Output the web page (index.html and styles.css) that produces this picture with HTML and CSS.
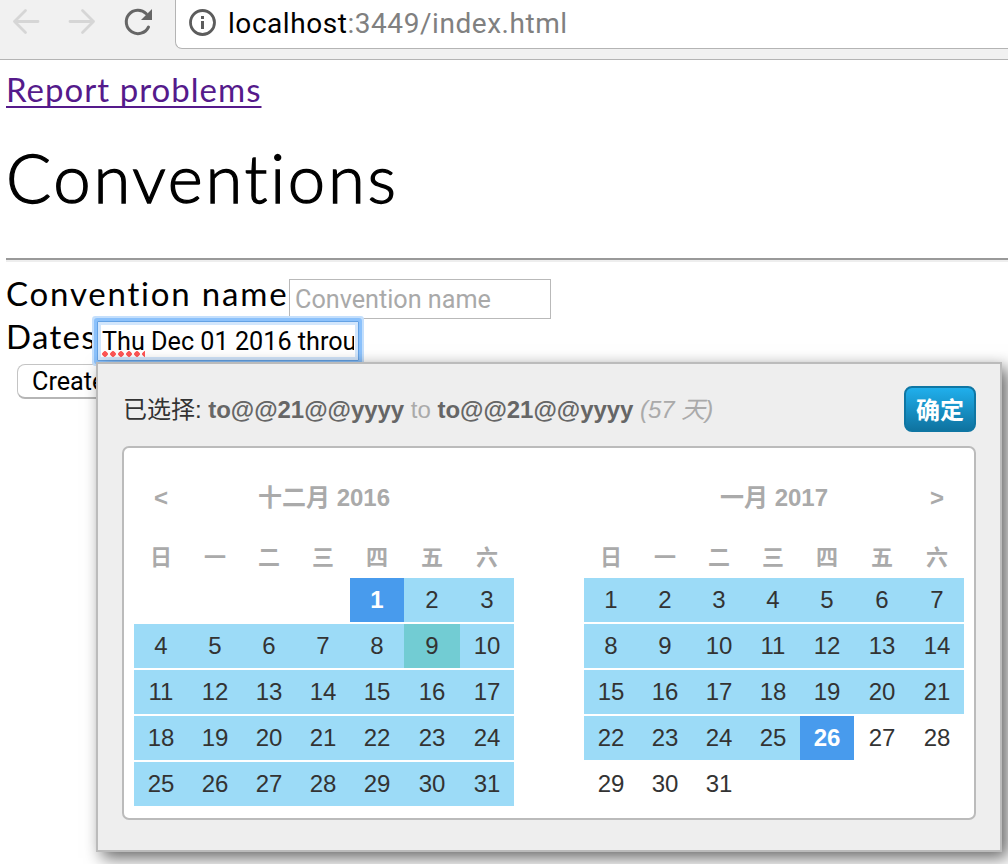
FILE: index.html
```html
<!DOCTYPE html>
<html lang="en">
<head>
<meta charset="utf-8">
<title>Conventions</title>
<link rel="stylesheet" href="styles.css">
</head>
<body>
<header class="toolbar">
  <svg class="nav-icons" width="175" height="59" viewBox="0 0 175 59" fill="none">
    <g stroke="#d6d6d6" stroke-width="2.8" stroke-linecap="round" stroke-linejoin="round">
      <path d="M38 21.5H14.5M25.5 10.5L14.5 21.5L25.5 32.5"/>
      <path d="M70 21.5H93.5M82.500 10.500L93.500 21.500L82.500 32.500"/>
    </g>
    <path d="M148.500 27.000A11.700 11.700 0 1 1 146.300 13.700" stroke="#666" stroke-width="3" stroke-linecap="round"/>
    <path d="M152 9V20H141Z" fill="#666"/>
  </svg>
  <div class="omnibox">
    <svg class="info" width="28" height="28" viewBox="0 0 28 28" fill="none">
      <circle cx="13.500" cy="13.500" r="12" stroke="#5c5c5c" stroke-width="2.800"/>
      <path d="M12 7h3v3h-3zM12 12h3v8h-3z" fill="#5c5c5c"/>
    </svg>
    <span class="url"><span class="host">localhost</span>:3449/index.html</span>
  </div>
</header>
<main class="page">
  <div class="report"><a class="report-link" href="#">Report problems</a></div>
  <h1 class="title">Conventions</h1>
  <hr class="rule">
  <div class="row row-name"><label class="label label-name">Convention name</label><div class="field">Convention name</div></div>
  <div class="row row-dates"><label class="label label-dates">Dates</label><div class="field field-focus"><span class="date-text"><span class="typo">Thu</span> Dec 01 2016 throu</span></div></div>
  <button class="create">Create</button>
</main>
<section class="picker">
  <div class="summary">
    <div class="selection">已选择: <b>to@@21@@yyyy</b> <span class="muted">to</span> <b>to@@21@@yyyy</b> <i class="muted">(57 天)</i></div>
    <button class="apply">确定</button>
  </div>
  <div class="months">
    <div class="month">
      <span class="arrow">&lt;</span><span class="caption">十二月 2016</span><span></span>
      <span class="wd">日</span><span class="wd">一</span><span class="wd">二</span><span class="wd">三</span><span class="wd">四</span><span class="wd">五</span><span class="wd">六</span>
      <span class="day end first-thu">1</span><span class="day in">2</span><span class="day in">3</span>
      <span class="day in">4</span><span class="day in">5</span><span class="day in">6</span><span class="day in">7</span><span class="day in">8</span><span class="day today">9</span><span class="day in">10</span>
      <span class="day in">11</span><span class="day in">12</span><span class="day in">13</span><span class="day in">14</span><span class="day in">15</span><span class="day in">16</span><span class="day in">17</span>
      <span class="day in">18</span><span class="day in">19</span><span class="day in">20</span><span class="day in">21</span><span class="day in">22</span><span class="day in">23</span><span class="day in">24</span>
      <span class="day in">25</span><span class="day in">26</span><span class="day in">27</span><span class="day in">28</span><span class="day in">29</span><span class="day in">30</span><span class="day in">31</span>
    </div>
    <div class="month">
      <span></span><span class="caption">一月 2017</span><span class="arrow">&gt;</span>
      <span class="wd">日</span><span class="wd">一</span><span class="wd">二</span><span class="wd">三</span><span class="wd">四</span><span class="wd">五</span><span class="wd">六</span>
      <span class="day in">1</span><span class="day in">2</span><span class="day in">3</span><span class="day in">4</span><span class="day in">5</span><span class="day in">6</span><span class="day in">7</span>
      <span class="day in">8</span><span class="day in">9</span><span class="day in">10</span><span class="day in">11</span><span class="day in">12</span><span class="day in">13</span><span class="day in">14</span>
      <span class="day in">15</span><span class="day in">16</span><span class="day in">17</span><span class="day in">18</span><span class="day in">19</span><span class="day in">20</span><span class="day in">21</span>
      <span class="day in">22</span><span class="day in">23</span><span class="day in">24</span><span class="day in">25</span><span class="day end">26</span><span class="day">27</span><span class="day">28</span>
      <span class="day">29</span><span class="day">30</span><span class="day">31</span>
    </div>
  </div>
</section>
</body>
</html>
```
FILE: styles.css
```css
* { box-sizing: border-box; }
body {
  margin: 0;
  height: 864px;
  position: relative;
  overflow: hidden;
  background: #fff;
  color: #000;
  font-family: Lato, "Liberation Sans", sans-serif;
}
.toolbar { display: flex; height: 60px; background: #f1f1f1; border-bottom: 1px solid #b4b4b4; }
.nav-icons { flex: none; }
.omnibox {
  flex: 1;
  height: 49px;
  display: flex;
  align-items: center;
  gap: 11px;
  padding: 0 0 2px 13px;
  background: #fff;
  border: 1px solid #b4b4b4;
  border-width: 0 0 1px 1px;
  border-bottom-left-radius: 7px;
}
.url { padding-top: 2px; font: 28px/32px Roboto, sans-serif; letter-spacing: 0.55px; color: #808080; white-space: nowrap; }
.host { color: #000; }
.page { padding-left: 6px; }
.report { height: 66px; padding-top: 9px; font-size: 33px; line-height: 40px; }
.report-link {
  color: #551a8b;
  letter-spacing: 1.020px;
  text-decoration: underline;
  text-decoration-thickness: 2px;
  text-underline-offset: 4px;
  text-decoration-skip-ink: none;
}
.title { margin: 0; height: 132px; padding-top: 9px; font-size: 67px; line-height: 84px; font-weight: 300; letter-spacing: 2.700px; -webkit-text-stroke: 1.300px #000; }
.rule { margin: 0; border: 0; height: 4px; border-top: 2px solid #999; border-bottom: 2px solid #eee; }
.row { display: flex; align-items: flex-start; }
.row-name { height: 56px; padding-top: 17px; }
.row-dates { height: 46px; }
.label { font-size: 33px; line-height: 36px; white-space: nowrap; flex: none; }
.label-name { width: 283px; line-height: 29px; letter-spacing: 1.800px; }
.label-dates { width: 91px; letter-spacing: 1.300px; }
.field {
  width: 262px;
  height: 40px;
  padding: 0 5px;
  border: 1px solid #b9b9b9;
  background: #fff;
  color: #a9a9a9;
  font: 25.200px/39px Roboto, sans-serif;
  white-space: nowrap;
}
.field-focus {
  margin-top: 3px;
  padding: 0 4px 0 4px;
  color: #000;
  border: 1px solid #64a2e4;
  border-radius: 1px;
  box-shadow: inset 0 0 0 3px #d2e6fc, 0 0 0 3px #8bc1fb, 0 0 0 5px #c4dffc;
}
.date-text { display: block; overflow: hidden; }
.typo {
  display: inline-block;
  height: 38px;
  background: radial-gradient(circle at 3px 3px, #f55 2.500px, transparent 3px) 0 29px / 8px 6px repeat-x;
}
.create {
  display: block;
  width: 122px;
  height: 35px;
  margin: 0 0 0 11px;
  padding: 2px 0 0 14px;
  text-align: left;
  border: 1px solid #c4c4c4;
  border-bottom: 2px solid #b5b5b5;
  border-radius: 8px;
  background: #fff;
  font: 25.200px/30px Roboto, sans-serif;
}
.picker {
  position: absolute;
  left: 96px;
  top: 362px;
  width: 906px;
  height: 490px;
  padding: 22px 24px;
  background: #eee;
  border: 2px solid #bbb;
  box-shadow: 6px 6px 16px rgba(0,0,0,.6);
  color: #333;
  font: 24px/30px "Liberation Sans", "Noto Sans CJK SC", sans-serif;
}
.summary { display: flex; justify-content: space-between; height: 60px; }
.selection { padding: 9px 0 0 1px; white-space: nowrap; letter-spacing: -0.030px; }
.selection b { color: #666; }
.muted { color: #aaa; }
.apply {
  width: 72px;
  height: 46px;
  padding: 0;
  border: 2px solid #0f76a3;
  border-radius: 8px;
  background: linear-gradient(#20afec, #0f73a0);
  color: #fff;
  font: bold 24px/40px "Noto Sans CJK SC", sans-serif;
}
.months {
  display: flex;
  justify-content: space-between;
  height: 374px;
  padding: 20px 10px;
  background: #fff;
  border: 2px solid #bbb;
  border-radius: 7px;
}
.month {
  display: grid;
  width: 380px;
  grid-template-columns: repeat(5, 54px) 56px 54px;
  grid-template-rows: 60px 46px repeat(5, 44px);
  row-gap: 2px;
  height: 338px;
  align-content: start;
  text-align: center;
}
.caption { grid-column: 2 / 7; }
.caption, .arrow { color: #aaa; font-weight: bold; line-height: 60px; }
.wd { color: #aaa; font-weight: bold; font-size: 22px; line-height: 56px; }
.day { line-height: 44px; }
.in { background: #9cdbf7; }
.today { background: #72ccd3; }
.end { background: #489bed; color: #fff; font-weight: bold; }
.first-thu { grid-column: 5; }
```
